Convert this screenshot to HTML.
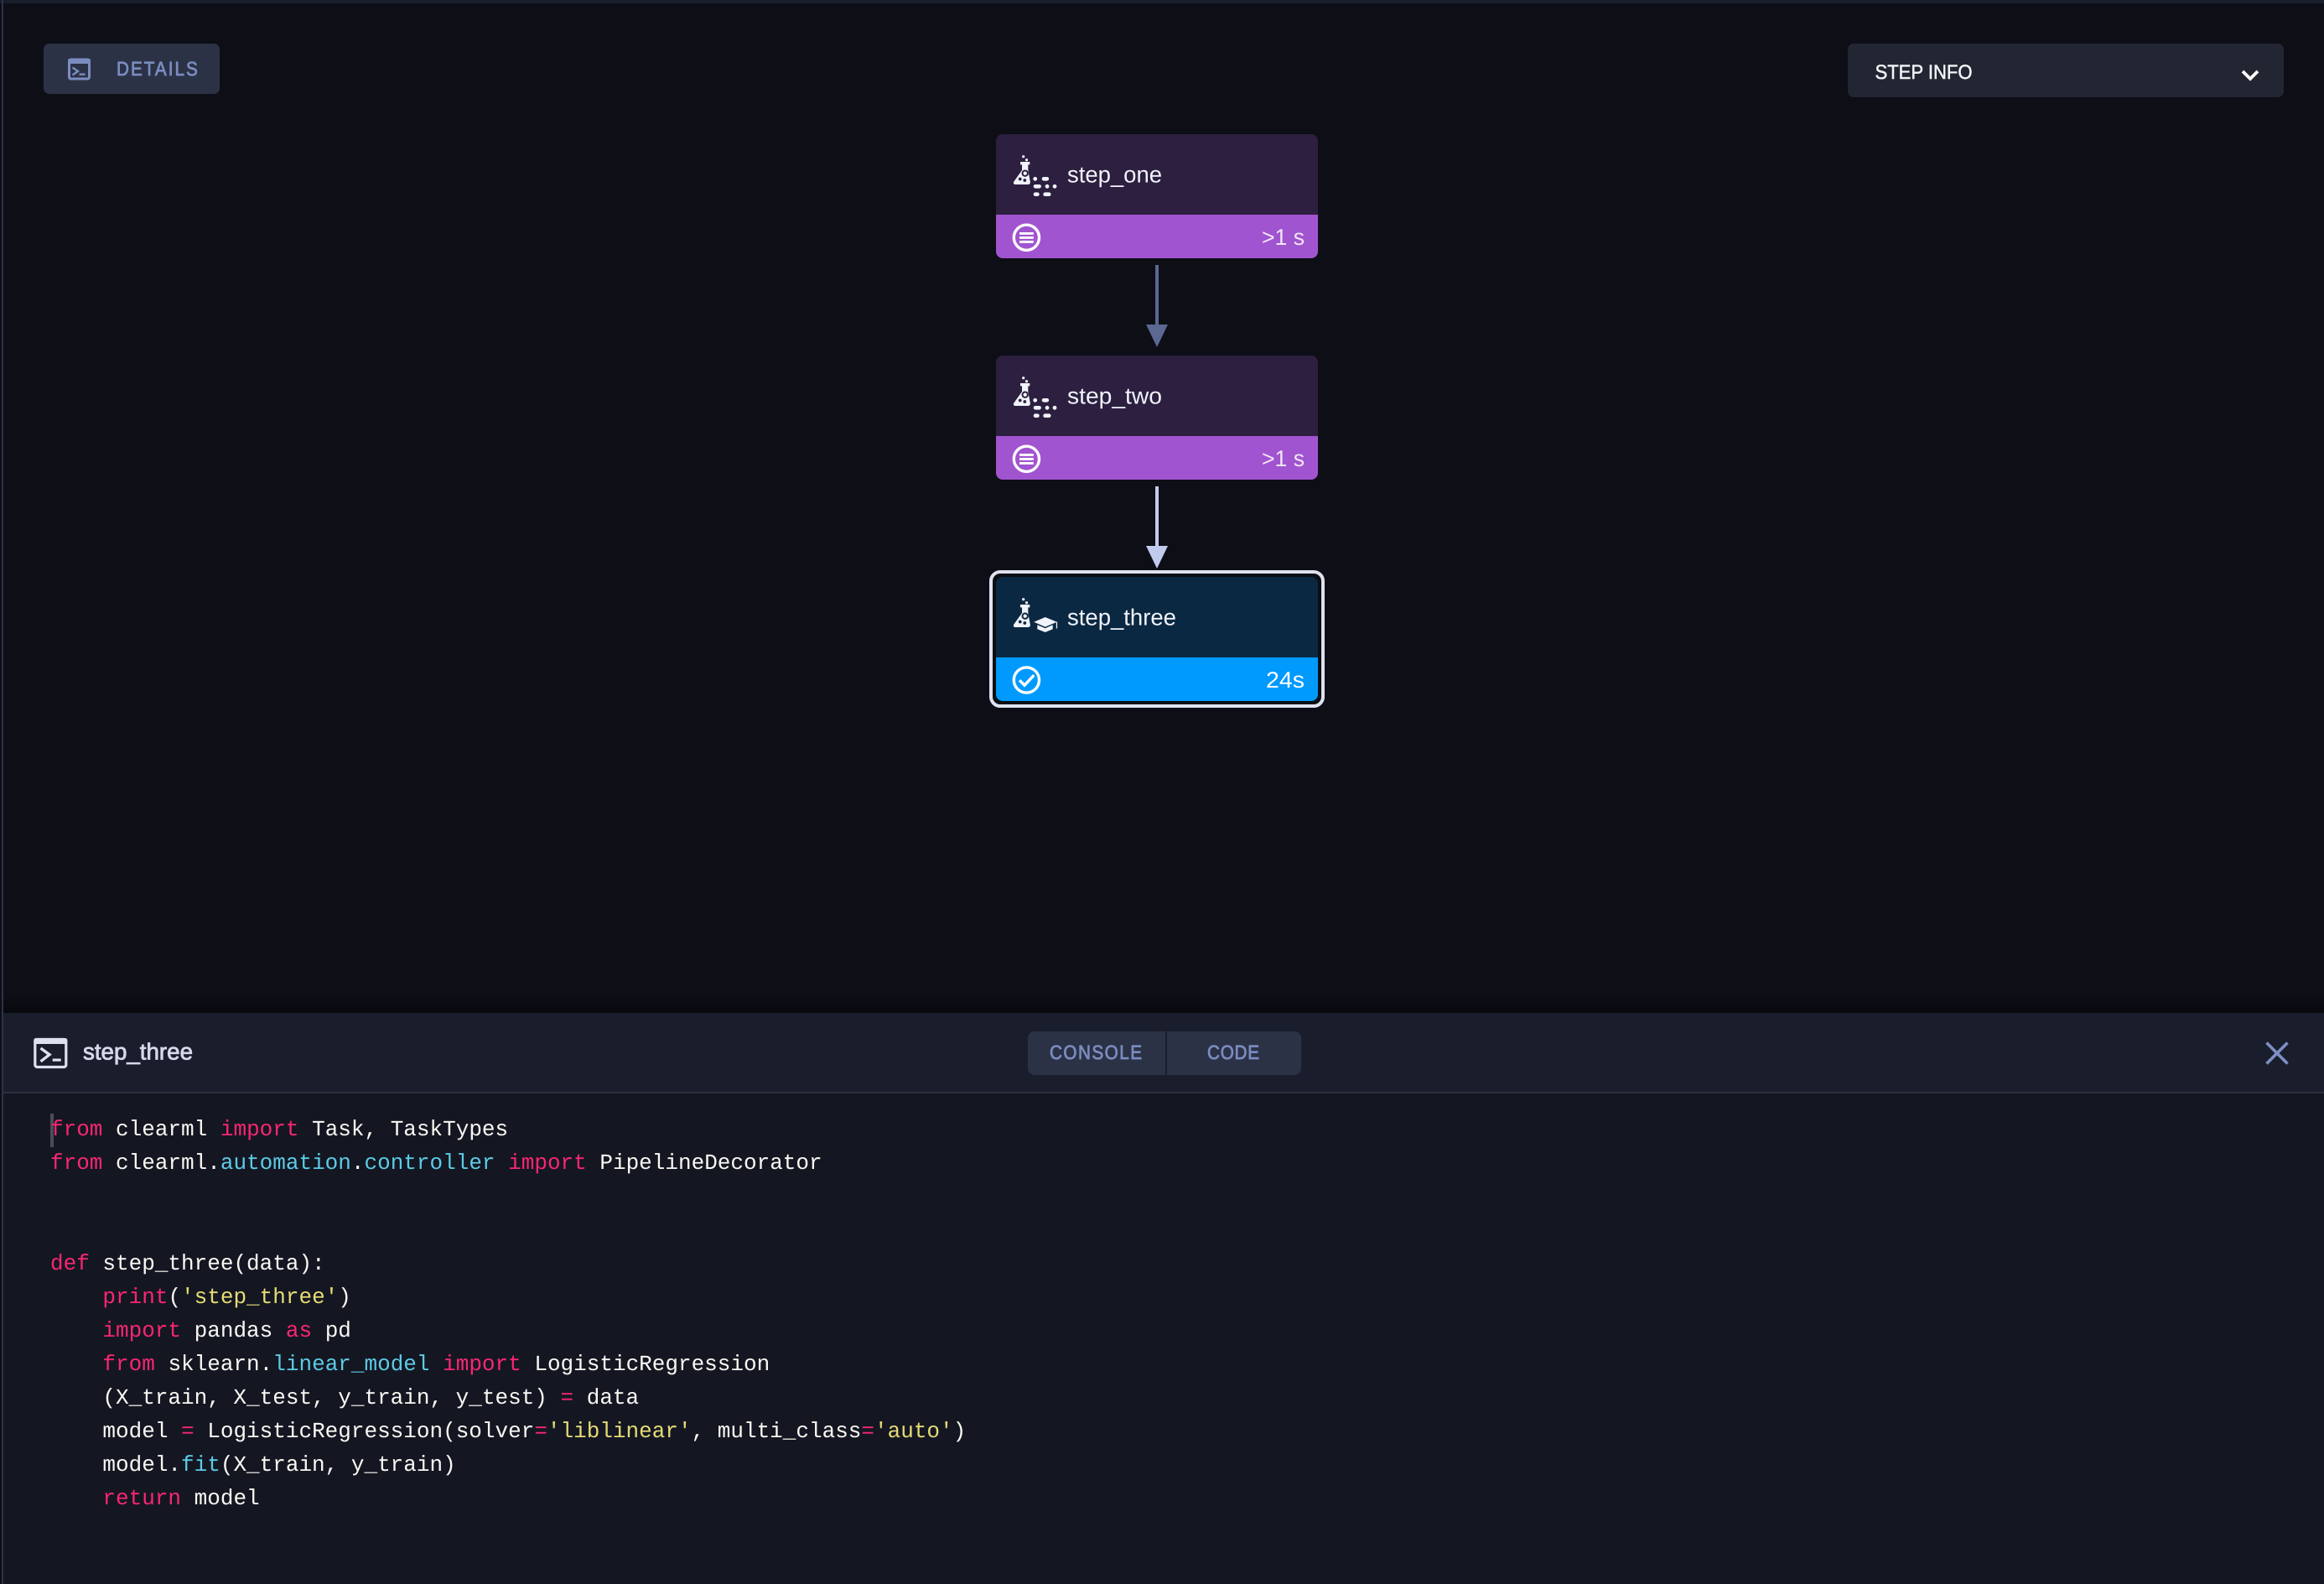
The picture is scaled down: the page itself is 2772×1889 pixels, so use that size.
<!DOCTYPE html>
<html>
<head>
<meta charset="utf-8">
<title>step_three</title>
<style>
html,body{margin:0;padding:0;width:2772px;height:1889px;overflow:hidden;background:#0d0e16}
svg{position:absolute;left:0;top:0;display:block}
text{font-family:"Liberation Sans",sans-serif;text-rendering:geometricPrecision}
.med{stroke-width:.8px;paint-order:stroke}
.code text{font-family:"Liberation Mono",monospace;font-size:26px;fill:#f8f8f2;white-space:pre}
.k{fill:#f92672}.c{fill:#5ccbe6}.s{fill:#e6db74}
</style>
</head>
<body>
<svg width="2772" height="1889" viewBox="0 0 2772 1889" xmlns="http://www.w3.org/2000/svg">
<defs>
<linearGradient id="sh" x1="0" y1="0" x2="0" y2="1"><stop offset="0" stop-color="#08090d" stop-opacity="0"/><stop offset="1" stop-color="#08090d"/></linearGradient>
<g id="flask" fill="#f1f3fb">
<circle cx="1220.7" cy="186.7" r="1.6"/><circle cx="1224.5" cy="190.7" r="1.6"/>
<path d="M1217 193H1228.300V196.400H1226.300V203L1228.800 216.800C1229.100 218.800 1228 220 1226.200 220H1211C1209 220 1208.400 218.400 1209.200 216.800L1219 203V196.400H1217Z"/>
<circle cx="1222.700" cy="206.700" r="3.200" fill="none" stroke="var(--h)" stroke-width="2"/>
<circle cx="1216.700" cy="213.500" r="1.900" fill="var(--h)"/><circle cx="1222.300" cy="215" r="1.900" fill="var(--h)"/>
</g>
<g id="data" fill="#f1f3fb">
<circle cx="1234.7" cy="213.3" r="2.4"/><rect x="1242.7" y="211" width="8.4" height="4.6" rx="2.3"/>
<rect x="1232.7" y="220" width="9.2" height="4.6" rx="2.3"/><circle cx="1249" cy="222.3" r="2.4"/><circle cx="1258" cy="222.3" r="2.4"/>
<rect x="1232.7" y="229.4" width="7" height="4.6" rx="2.3"/><rect x="1244.3" y="229.4" width="9.2" height="4.6" rx="2.3"/>
</g>
<g id="queued" fill="none" stroke="#fff">
<circle cx="1224.4" cy="283.3" r="15.1" stroke-width="3.4"/>
<path d="M1216 278.4h16.8M1216 283.4h16.8M1216 288.4h16.8" stroke-width="2.9"/>
</g>
</defs>

<!-- frame -->
<rect x="0" y="0" width="2772" height="4" fill="#1a1e2c"/>
<rect x="2" y="0" width="2" height="1889" fill="#2c3246"/>
<rect x="4" y="1188" width="2768" height="20" fill="url(#sh)"/>

<!-- details button -->
<rect x="52" y="52" width="210" height="60" rx="7" fill="#2c3246"/>
<rect x="82.500" y="71" width="24" height="23" rx="2" fill="none" stroke="#7b8cc0" stroke-width="3"/>
<rect x="81" y="70" width="27" height="6" rx="2" fill="#7b8cc0"/>
<path d="M86.500 80.500l6.500 4.500-6.500 4.500" fill="none" stroke="#7b8cc0" stroke-width="2.400"/>
<rect x="94.500" y="87.500" width="7" height="2.400" fill="#7b8cc0"/>
<text transform="translate(139 90) scale(.88 1)" font-size="23.500" fill="#7b8cc0" stroke="#7b8cc0" class="med" textLength="110" lengthAdjust="spacing">DETAILS</text>

<!-- step info -->
<rect x="2204" y="52" width="520" height="64" rx="7" fill="#222632"/>
<text x="2236.500" y="94" font-size="24" fill="#f2f3f8" stroke="#f2f3f8" stroke-width=".5" style="paint-order:stroke" textLength="116" lengthAdjust="spacingAndGlyphs">STEP INFO</text>
<path d="M2675 85l9 9 9-9" fill="none" stroke="#fff" stroke-width="3.800"/>

<!-- node 1 -->
<g style="--h:#2c1f3f">
<path d="M1196 160h368a8 8 0 0 1 8 8v88h-384v-88a8 8 0 0 1 8-8z" fill="#2c1f3f"/>
<path d="M1188 256h384v44a8 8 0 0 1-8 8h-368a8 8 0 0 1-8-8z" fill="#a154cf"/>
<use href="#flask"/><use href="#data"/><use href="#queued"/>
<text x="1273" y="217.500" font-size="27.500" fill="#f1f3fb" textLength="113" lengthAdjust="spacingAndGlyphs">step_one</text>
<text x="1505" y="292" font-size="27" fill="#f1e6f8" textLength="51" lengthAdjust="spacingAndGlyphs">&gt;1 s</text>
</g>
<rect x="1378" y="316" width="4" height="72" fill="#5a6892"/>
<path d="M1367 387h26l-13 27z" fill="#5a6892"/>

<!-- node 2 -->
<g style="--h:#2c1f3f">
<path d="M1196 424h368a8 8 0 0 1 8 8v88h-384v-88a8 8 0 0 1 8-8z" fill="#2c1f3f"/>
<path d="M1188 520h384v44a8 8 0 0 1-8 8h-368a8 8 0 0 1-8-8z" fill="#a154cf"/>
<g transform="translate(0 264)"><use href="#flask"/><use href="#data"/><use href="#queued"/></g>
<text x="1273" y="481.500" font-size="27.500" fill="#f1f3fb" textLength="113" lengthAdjust="spacingAndGlyphs">step_two</text>
<text x="1505" y="556" font-size="27" fill="#f1e6f8" textLength="51" lengthAdjust="spacingAndGlyphs">&gt;1 s</text>
</g>
<rect x="1378" y="580" width="4" height="72" fill="#c1cbee"/>
<path d="M1367 651h26l-13 27z" fill="#c1cbee"/>

<!-- node 3 -->
<g style="--h:#0b2842">
<rect x="1182" y="682" width="396" height="160" rx="11" fill="#0c0e14" stroke="#dfe2f0" stroke-width="4"/>
<path d="M1196 688h368a8 8 0 0 1 8 8v88h-384v-88a8 8 0 0 1 8-8z" fill="#0b2842"/>
<path d="M1188 784h384v44a8 8 0 0 1-8 8h-368a8 8 0 0 1-8-8z" fill="#009aff"/>
<g transform="translate(0 528)"><use href="#flask"/></g>
<path d="M1246.700 736l14 5.800-14 5.800-13.500-5.800z" fill="#f1f3fb"/>
<path d="M1237.300 745.300l9.400 4 9-4v5l-9 3.700-9.400-3.700z" fill="#f1f3fb"/>
<rect x="1259.800" y="741.500" width="1.300" height="8" fill="#f1f3fb"/>
<circle cx="1224.400" cy="811" r="15.100" fill="none" stroke="#fff" stroke-width="3.400"/>
<path d="M1216 811.200l6 6 11.300-12" fill="none" stroke="#fff" stroke-width="3.400"/>
<text x="1273" y="745.500" font-size="27.500" fill="#f1f3fb" textLength="130" lengthAdjust="spacingAndGlyphs">step_three</text>
<text x="1510" y="820" font-size="27" fill="#fff" textLength="46" lengthAdjust="spacingAndGlyphs">24s</text>
</g>

<!-- bottom panel -->
<rect x="4" y="1208" width="2768" height="94" fill="#1a1e2c"/>
<rect x="4" y="1302" width="2768" height="2" fill="#2d303c"/>
<rect x="4" y="1304" width="2768" height="585" fill="#141722"/>

<rect x="41.800" y="1239.500" width="37" height="33" rx="2.500" fill="none" stroke="#dde0ef" stroke-width="3.200"/>
<rect x="40.300" y="1238" width="40" height="7" rx="2.500" fill="#dde0ef"/>
<path d="M48.500 1250l10.500 7.700-10.500 8.100" fill="none" stroke="#dde0ef" stroke-width="3.400"/>
<rect x="62.700" y="1262.500" width="10" height="3.200" fill="#dde0ef"/>
<text x="99" y="1263.500" font-size="27.500" fill="#d5d9ea" stroke="#d5d9ea" class="med" textLength="131" lengthAdjust="spacingAndGlyphs">step_three</text>

<path d="M1234 1230h156v52h-156a8 8 0 0 1-8-8v-36a8 8 0 0 1 8-8z" fill="#2c3246"/>
<path d="M1392 1230h152a8 8 0 0 1 8 8v36a8 8 0 0 1-8 8h-152z" fill="#2c3246"/>
<text transform="translate(1252 1263) scale(.88 1)" font-size="23.500" fill="#7b8cc0" stroke="#7b8cc0" class="med" textLength="125" lengthAdjust="spacing">CONSOLE</text>
<text transform="translate(1440 1263) scale(.88 1)" font-size="23.500" fill="#7b8cc0" stroke="#7b8cc0" class="med" textLength="70.500" lengthAdjust="spacing">CODE</text>

<path d="M2703.500 1243.500l25 25M2728.500 1243.500l-25 25" fill="none" stroke="#7d8fc4" stroke-width="3.600"/>

<!-- code -->
<rect x="60" y="1328" width="4" height="40" fill="#4a4c57"/>
<g class="code">
<text x="60" y="1354"><tspan class="k">from</tspan> clearml <tspan class="k">import</tspan> Task, TaskTypes</text>
<text x="60" y="1394"><tspan class="k">from</tspan> clearml.<tspan class="c">automation</tspan>.<tspan class="c">controller</tspan> <tspan class="k">import</tspan> PipelineDecorator</text>
<text x="60" y="1514"><tspan class="k">def</tspan> step_three(data):</text>
<text x="60" y="1554">    <tspan class="k">print</tspan>(<tspan class="s">'step_three'</tspan>)</text>
<text x="60" y="1594">    <tspan class="k">import</tspan> pandas <tspan class="k">as</tspan> pd</text>
<text x="60" y="1634">    <tspan class="k">from</tspan> sklearn.<tspan class="c">linear_model</tspan> <tspan class="k">import</tspan> LogisticRegression</text>
<text x="60" y="1674">    (X_train, X_test, y_train, y_test) <tspan class="k">=</tspan> data</text>
<text x="60" y="1714">    model <tspan class="k">=</tspan> LogisticRegression(solver<tspan class="k">=</tspan><tspan class="s">'liblinear'</tspan>, multi_class<tspan class="k">=</tspan><tspan class="s">'auto'</tspan>)</text>
<text x="60" y="1754">    model.<tspan class="c">fit</tspan>(X_train, y_train)</text>
<text x="60" y="1794">    <tspan class="k">return</tspan> model</text>
</g>
</svg>
</body>
</html>
